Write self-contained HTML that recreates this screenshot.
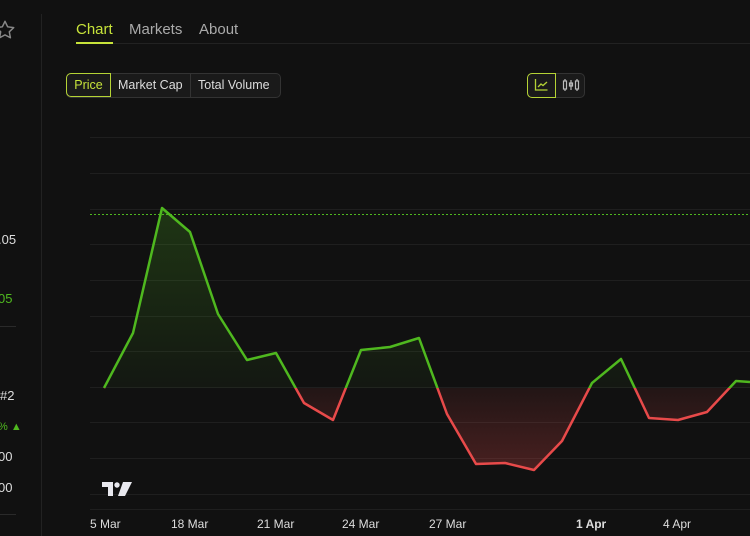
<!DOCTYPE html>
<html><head><style>
html,body{margin:0;padding:0;background:#111111;width:750px;height:536px;overflow:hidden;font-family:"Liberation Sans",sans-serif;}
.t{position:absolute;white-space:nowrap}
</style></head><body>
<div style="position:absolute;left:41px;top:14px;width:1px;height:522px;background:#222"></div>
<svg class="t" style="left:-6px;top:19px" width="22" height="22" viewBox="0 0 24 24"><path d="M12 2.5l2.9 6 6.6.9-4.8 4.6 1.2 6.5L12 17.3l-5.9 3.2 1.2-6.5L2.5 9.4l6.6-.9z" fill="none" stroke="#888" stroke-width="1.6" stroke-linejoin="round"/></svg>
<div class="t" style="left:76px;top:21px;font-size:15px;color:#c7e33a">Chart</div>
<div style="position:absolute;left:76px;top:42px;width:37px;height:2px;background:#c7e33a"></div>
<div class="t" style="left:129px;top:21px;font-size:15px;color:#aaa">Markets</div>
<div class="t" style="left:199px;top:21px;font-size:15px;color:#aaa">About</div>
<div style="position:absolute;left:113px;top:43px;width:637px;height:1px;background:#222"></div>
<div style="position:absolute;left:66px;top:73px;width:213px;height:23px;border:1px solid #333;border-radius:5px;background:#1a1a1a"></div>
<div class="t" style="left:66px;top:73px;width:43px;height:22px;border:1px solid #b5d335;border-radius:5px 0 0 5px;color:#c7e33a;font-size:12.5px;line-height:22px;text-align:center">Price</div>
<div class="t" style="left:118px;top:78px;font-size:12.5px;color:#ddd">Market Cap</div>
<div style="position:absolute;left:190px;top:74px;width:1px;height:23px;background:#333"></div>
<div class="t" style="left:198px;top:78px;font-size:12.5px;color:#ddd">Total Volume</div>
<div style="position:absolute;left:527px;top:73px;width:56px;height:23px;border:1px solid #333;border-radius:5px;background:#1a1a1a"></div>
<div style="position:absolute;left:527px;top:73px;width:27px;height:23px;border:1px solid #b5d335;border-radius:5px 0 0 5px"></div>
<svg class="t" style="left:534px;top:78px" width="16" height="14"><path d="M1.5 1v11h12" stroke="#b5d335" stroke-width="1.3" fill="none"/><path d="M4 9l3-3 2 1.5 4-3.5" stroke="#b5d335" stroke-width="1.3" fill="none"/></svg>
<svg class="t" style="left:562px;top:78px" width="18" height="14"><g stroke="#bbb" stroke-width="1.2" fill="none"><rect x="1.5" y="3" width="3" height="8"/><path d="M3 1v2M3 11v2M9 2v10M15 1v2M15 11v2"/><rect x="7.5" y="5" width="3" height="3"/><rect x="13.5" y="3" width="3" height="8"/></g></svg>
<div class="t" style="left:-2px;top:232px;font-size:13px;color:#ddd">.05</div>
<div class="t" style="left:-2px;top:291px;font-size:13px;color:#4fb81f">05</div>
<div style="position:absolute;left:0;top:326px;width:16px;height:1px;background:#2a2a2a"></div>
<div class="t" style="left:0px;top:388px;font-size:13px;color:#ddd">#2</div>
<div class="t" style="left:-2px;top:421px;font-size:11px;color:#4fb81f">% ▲</div>
<div class="t" style="left:-2px;top:449px;font-size:13px;color:#ddd">00</div>
<div class="t" style="left:-2px;top:480px;font-size:13px;color:#ddd">00</div>
<div style="position:absolute;left:0;top:514px;width:16px;height:1px;background:#2a2a2a"></div>
<svg class="t" style="left:0;top:0" width="750" height="536">
<defs>
<linearGradient id="gg" x1="0" y1="208" x2="0" y2="388" gradientUnits="userSpaceOnUse"><stop offset="0" stop-color="#4fb81f" stop-opacity=".22"/><stop offset="1" stop-color="#4fb81f" stop-opacity=".04"/></linearGradient>
<linearGradient id="rg" x1="0" y1="388" x2="0" y2="470" gradientUnits="userSpaceOnUse"><stop offset="0" stop-color="#e84a4a" stop-opacity=".08"/><stop offset="1" stop-color="#e84a4a" stop-opacity=".26"/></linearGradient>
<clipPath id="up"><rect x="0" y="0" width="750" height="388"/></clipPath>
<clipPath id="dn"><rect x="0" y="388" width="750" height="148"/></clipPath>
</defs>
<g stroke="#1f1f1f" stroke-width="1">
<path d="M90 137.5H750M90 173.5H750M90 209.5H750M90 244.5H750M90 280.5H750M90 316.5H750M90 351.5H750M90 387.5H750M90 422.5H750M90 458.5H750M90 494.5H750M90 509.5H750"/>
</g>
<path d="M90 214.5H750" stroke="#4fb81f" stroke-dasharray="2 2" stroke-width="1"/>
<path d="M104 388L133 333L162 208L190 232L218 314L247 360L276 353L304 403L333 420L361 350L390 347L419 338L447 414L476 464L505 463L534 470L562 441L592 383L621 359L649 418L678 420L707 412L736 381L750 382L750 388L104 388Z" fill="url(#gg)" clip-path="url(#up)"/>
<path d="M104 388L133 333L162 208L190 232L218 314L247 360L276 353L304 403L333 420L361 350L390 347L419 338L447 414L476 464L505 463L534 470L562 441L592 383L621 359L649 418L678 420L707 412L736 381L750 382L750 388L104 388Z" fill="url(#rg)" clip-path="url(#dn)"/>
<path d="M104 388L133 333L162 208L190 232L218 314L247 360L276 353L304 403L333 420L361 350L390 347L419 338L447 414L476 464L505 463L534 470L562 441L592 383L621 359L649 418L678 420L707 412L736 381L750 382" fill="none" stroke="#4fb81f" stroke-width="2.5" stroke-linejoin="round" clip-path="url(#up)"/>
<path d="M104 388L133 333L162 208L190 232L218 314L247 360L276 353L304 403L333 420L361 350L390 347L419 338L447 414L476 464L505 463L534 470L562 441L592 383L621 359L649 418L678 420L707 412L736 381L750 382" fill="none" stroke="#e84a4a" stroke-width="2.5" stroke-linejoin="round" clip-path="url(#dn)"/>
<g fill="#e8e8ee"><path d="M102 482h11v14h-5v-9h-6z"/><circle cx="117" cy="485" r="2.7"/><path d="M123 482h9l-7 14h-7z"/></g>
<g font-family="Liberation Sans,sans-serif" font-size="12" fill="#ddd">
<text x="90" y="528">5 Mar</text><text x="171" y="528">18 Mar</text><text x="257" y="528">21 Mar</text><text x="342" y="528">24 Mar</text><text x="429" y="528">27 Mar</text><text x="576" y="528" font-weight="bold">1 Apr</text><text x="663" y="528">4 Apr</text>
</g>
</svg>
</body></html>
